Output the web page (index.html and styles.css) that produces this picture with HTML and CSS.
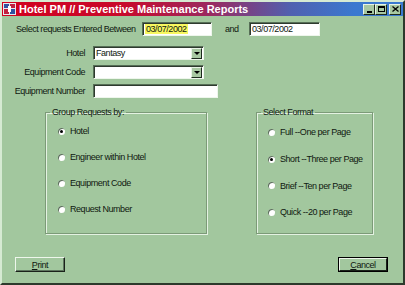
FILE: index.html
```html
<!DOCTYPE html>
<html>
<head>
<meta charset="utf-8">
<link rel="stylesheet" href="styles.css">
</head>
<body>
<div class="window">
  <div class="titlebar">
    <svg class="appicon" width="13" height="12" viewBox="0 0 13 12">
      <rect x="0" y="0" width="13" height="12" fill="#e8e8f0"/>
      <rect x="1" y="1" width="5" height="4" fill="#3050a0"/>
      <rect x="7" y="1" width="5" height="4" fill="#c02040"/>
      <rect x="1" y="6" width="5" height="5" fill="#c02040"/>
      <rect x="7" y="6" width="5" height="5" fill="#3050a0"/>
      <rect x="5" y="3" width="3" height="6" fill="#ffffff"/>
    </svg>
    <span class="title">Hotel PM // Preventive Maintenance Reports</span>
    <div class="controls">
      <span class="cbtn"><span class="min"></span></span>
      <span class="cbtn"><span class="max"></span></span>
      <span class="cbtn close">
        <svg width="7" height="6" viewBox="0 0 7 6"><path d="M0.5 0.5 L6.5 5.5 M6.5 0.5 L0.5 5.5" stroke="#000" stroke-width="1.3"/></svg>
      </span>
    </div>
  </div>

  <div class="content">
    <div class="daterow">
      <span class="datelabel">Select requests Entered Between</span>
      <span class="field date1"><span class="sel">03/07/2002</span></span>
      <span class="andlabel">and</span>
      <span class="field date2">03/07/2002</span>
    </div>

    <div class="fields">
      <span class="flabel">Hotel</span>
      <span class="field combo"><span class="ctext">Fantasy</span><span class="drop"><span class="tri"></span></span></span>
      <span class="flabel">Equipment Code</span>
      <span class="field combo"><span class="ctext"></span><span class="drop"><span class="tri"></span></span></span>
      <span class="flabel">Equipment Number</span>
      <span class="field wide"></span>
    </div>

    <div class="groups">
      <fieldset class="group gleft">
        <legend>Group Requests by:</legend>
        <div class="radio"><span class="dot on"></span>Hotel</div>
        <div class="radio"><span class="dot"></span>Engineer within Hotel</div>
        <div class="radio"><span class="dot"></span>Equipment Code</div>
        <div class="radio"><span class="dot"></span>Request Number</div>
      </fieldset>
      <fieldset class="group gright">
        <legend>Select Format</legend>
        <div class="radio"><span class="dot"></span>Full --One per Page</div>
        <div class="radio"><span class="dot on"></span>Short --Three per Page</div>
        <div class="radio"><span class="dot"></span>Brief --Ten per Page</div>
        <div class="radio"><span class="dot"></span>Quick --20 per Page</div>
      </fieldset>
    </div>

    <div class="buttons">
      <span class="btn"><u>P</u>rint</span>
      <span class="btn default"><span class="btninner"><u>C</u>ancel</span></span>
    </div>
  </div>
</div>
</body>
</html>
```

FILE: styles.css
```css
* { box-sizing: border-box; }
html, body { margin: 0; padding: 0; }
body {
  width: 405px;
  height: 285px;
  overflow: hidden;
  background: #a2c79e;
  font-family: "Liberation Sans", Arial, sans-serif;
  font-size: 9px;
  letter-spacing: -0.45px;
  color: #101810;
}
.window {
  width: 405px;
  height: 285px;
  background: #a2c79e;
  border: 2px solid;
  border-color: #d6ead3 #2c3a2c #2c3a2c #d6ead3;
  display: flex;
  flex-direction: column;
}
.titlebar {
  height: 14px;
  display: flex;
  align-items: center;
  background: linear-gradient(to right, #d2001e 0%, #c80a2c 30%, #9a2a60 52%, #5060b0 72%, #3a78d0 88%, #3a7ad0 100%);
  padding-left: 1px;
}
.appicon { flex: none; }
.title {
  margin-left: 3px;
  color: #fff;
  font-weight: bold;
  font-size: 11px;
  letter-spacing: 0;
  white-space: nowrap;
}
.controls {
  margin-left: auto;
  margin-right: 2px;
  display: flex;
}
.cbtn {
  width: 12px;
  height: 11px;
  background: #a8c8a2;
  border: 1px solid;
  border-color: #e8f4e6 #1e2a1e #1e2a1e #e8f4e6;
  display: flex;
  align-items: center;
  justify-content: center;
}
.cbtn.close { margin-left: 2px; }
.min {
  width: 5px;
  height: 2px;
  background: #000;
  margin-top: 5px;
}
.max {
  width: 7px;
  height: 6px;
  border: 1px solid #000;
  border-top-width: 2px;
}
.content {
  flex: 1;
  display: flex;
  flex-direction: column;
}
.daterow {
  margin-top: 6px;
  padding-left: 14px;
  display: flex;
  align-items: center;
  height: 14px;
}
.datelabel { width: 126px; white-space: nowrap; }
.field {
  display: flex;
  align-items: center;
  height: 14px;
  background: #fff;
  border: 1px solid;
  border-color: #566e56 #eef6ec #eef6ec #566e56;
  box-shadow: inset 1px 1px #2e3a2e;
  padding-left: 2px;
  white-space: nowrap;
}
.date1 { width: 70px; }
.date2 { width: 71px; }
.sel { background: #f8f860; padding: 0 1px; }
.andlabel { margin-left: 13px; width: 24px; }
.fields {
  margin-top: 10px;
  padding-left: 14px;
  display: grid;
  grid-template-columns: 69px auto;
  column-gap: 8px;
  row-gap: 5px;
  justify-items: start;
  align-items: center;
}
.flabel { justify-self: end; white-space: nowrap; }
.combo { width: 111px; padding-right: 1px; }
.ctext { flex: 1; }
.drop {
  width: 11px;
  height: 11px;
  background: #a8c8a2;
  border: 1px solid;
  border-color: #e8f4e6 #1e2a1e #1e2a1e #e8f4e6;
  display: flex;
  align-items: center;
  justify-content: center;
}
.tri {
  width: 0;
  height: 0;
  border-left: 3px solid transparent;
  border-right: 3px solid transparent;
  border-top: 3px solid #000;
}
.wide { width: 125px; }
.groups {
  margin-top: 8px;
  display: flex;
  padding-left: 43px;
  gap: 49px;
}
.group {
  margin: 0;
  padding: 1px 0 0 0;
  height: 128px;
  border: 1px solid #7c9a78;
  box-shadow: inset 1px 1px #e4f2e2, 1px 1px #e4f2e2;
}
.group legend {
  padding: 0 2px;
  margin-left: 4px;
  line-height: 12px;
}
.gleft { width: 162px; padding-top: 0; }
.gright { width: 117px; }
.gleft .radio { height: 26px; padding-left: 12px; }
.gright .radio { height: 26.7px; padding-left: 11px; }
.radio {
  display: flex;
  align-items: center;
  gap: 5px;
  white-space: nowrap;
}
.dot {
  width: 7px;
  height: 7px;
  border-radius: 50%;
  background: #fff;
  box-shadow: inset 1px 1px #5a6e5a;
  display: flex;
  align-items: center;
  justify-content: center;
  flex: none;
}
.dot.on::after {
  content: "";
  width: 3px;
  height: 3px;
  border-radius: 50%;
  background: #000;
}
.buttons {
  margin-top: 23px;
  padding: 0 13px;
  display: flex;
  justify-content: space-between;
}
.btn {
  width: 50px;
  height: 15px;
  background: #a2c79e;
  border: 1px solid;
  border-color: #eef6ec #1a221a #1a221a #eef6ec;
  box-shadow: inset -1px -1px #5e765e;
  display: flex;
  align-items: center;
  justify-content: center;
}
.btn.default {
  border: 1px solid #000;
  box-shadow: none;
  margin-right: 2px;
}
.btninner {
  width: 100%;
  height: 100%;
  display: flex;
  align-items: center;
  justify-content: center;
  border: 1px solid;
  border-color: #eef6ec #1a221a #1a221a #eef6ec;
}
u { text-decoration-thickness: 1px; text-underline-offset: 1px; }
```
